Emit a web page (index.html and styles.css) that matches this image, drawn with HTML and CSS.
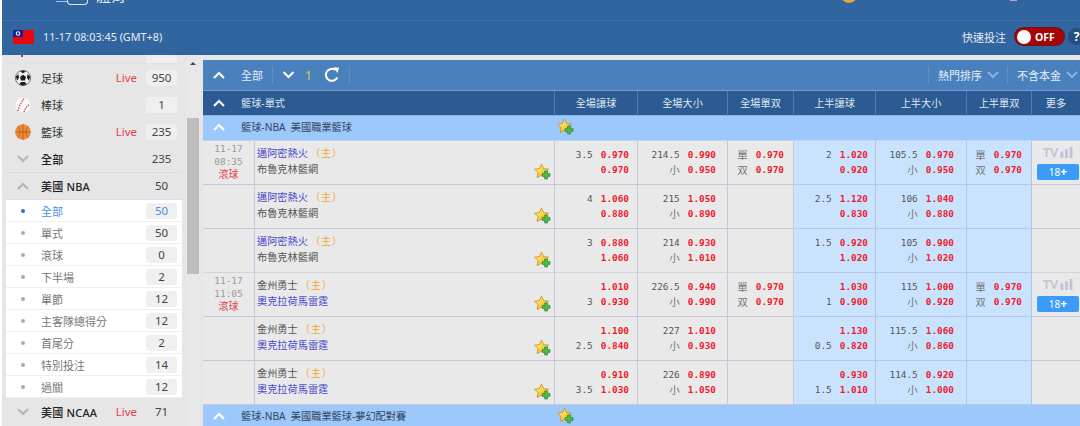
FILE: index.html
```html
<!DOCTYPE html>
<html>
<head>
  <title>籃球 - 單式</title>
  <meta charset="utf-8">
  <link rel="stylesheet" href="styles.css">
</head>
<body>
  <svg class="sprite" width="0" height="0">
    <defs>
      <linearGradient id="gold" x1="0" y1="0" x2="1" y2="1">
        <stop offset="0" stop-color="#fff6a8"/><stop offset=".55" stop-color="#f8d23c"/><stop offset="1" stop-color="#dd9a16"/>
      </linearGradient>
      <symbol id="star" viewBox="0 0 17 17">
        <path d="M7.5 1l2.1 4.6 4.9.6-3.6 3.4.9 5-4.3-2.5-4.4 2.5 1-5L.6 6.2l4.9-.6z" fill="url(#gold)" stroke="#c9942a" stroke-width=".9" stroke-linejoin="round"/>
        <path d="M10.6 8h3v2.4H16v3h-2.4V16h-3v-2.6H8.2v-3h2.4z" fill="#4fb848" stroke="#2f8a35" stroke-width=".7"/>
      </symbol>
      <symbol id="up" viewBox="0 0 12 8"><path d="M1 7l5-5 5 5" fill="none" stroke="currentColor" stroke-width="2"/></symbol>
      <symbol id="down" viewBox="0 0 12 8"><path d="M1 1l5 5 5-5" fill="none" stroke="currentColor" stroke-width="2"/></symbol>
    </defs>
  </svg>

  <header class="top">
    <div class="brand">
      <span class="brand-line"></span><span class="brand-box"></span><span class="brand-text">體育</span>
    </div>
    <span class="coin"></span>
    <span class="bit"></span>
  </header>
  <div class="subbar">
    <svg class="flag" viewBox="0 0 21 14">
      <rect width="21" height="14" fill="#e8080f"/><rect width="10" height="7" fill="#12209a"/>
      <circle cx="5" cy="3.5" r="2.2" fill="#fff"/><circle cx="5" cy="3.5" r="1.2" fill="#12209a"/>
    </svg>
    <span class="clock">11-17 08:03:45 (GMT+8)</span>
    <span class="quick">快速投注</span>
    <span class="toggle"><i class="knob"></i>OFF</span>
    <span class="help">?</span>
  </div>

  <div class="page">
    <aside class="side">
      <div class="cut"><span class="cut-mark"></span><span class="pill cut-pill"></span></div>
      <div class="s-row">
        <svg class="ball" viewBox="0 0 16 16"><circle cx="8" cy="8" r="7.6" fill="#eee" stroke="#444" stroke-width=".7"/><path d="M8 4.8l3 2.3-1.100 3.500H6.100L5 7.100zM8 .5l2.800 1L8 3.200 5.200 1.500zM.8 6.500l2.600-2.200.6 3.500-1.900 2.600zM15.200 6.500l-2.600-2.200-.6 3.500 1.900 2.600zM4.300 14.300l1.700-2.200h4l1.700 2.200L8 15.500z" fill="#1c1c1c"/></svg>
        <span class="s-name">足球</span><span class="live">Live</span><span class="pill">950</span>
      </div>
      <div class="s-row">
        <svg class="ball" viewBox="0 0 16 16"><circle cx="8" cy="8" r="7.6" fill="#fafafa"/><path d="M3 14c.5-4 3-8 6-12.500M9 15c1-3 3-6 6-8" fill="none" stroke="#d8453a" stroke-width="1.300" stroke-dasharray="1.500 1"/></svg>
        <span class="s-name">棒球</span><span class="pill">1</span>
      </div>
      <div class="s-row">
        <svg class="ball" viewBox="0 0 16 16"><circle cx="8" cy="8" r="7.800" fill="#ee8a35"/><path d="M.4 8h15.200M8 .2v15.600M2.700 2.500c3 3 3 8 0 11M13.300 2.500c-3 3-3 8 0 11" fill="none" stroke="#a9551c" stroke-width=".7"/></svg>
        <span class="s-name">籃球</span><span class="live">Live</span><span class="pill">235</span>
      </div>
      <div class="s-row s-line s-first">
        <svg class="chev"><use href="#down"/></svg>
        <span class="s-name s-bold">全部</span><span class="pill flat">235</span>
      </div>
      <div class="s-row s-line">
        <svg class="chev"><use href="#up"/></svg>
        <span class="s-name s-bold">美國 NBA</span><span class="pill flat">50</span>
      </div>
      <div class="sub active"><i class="dot"></i><span class="s-name">全部</span><span class="pill">50</span></div>
      <div class="sub"><i class="dot"></i><span class="s-name">單式</span><span class="pill">50</span></div>
      <div class="sub"><i class="dot"></i><span class="s-name">滾球</span><span class="pill">0</span></div>
      <div class="sub"><i class="dot"></i><span class="s-name">下半場</span><span class="pill">2</span></div>
      <div class="sub"><i class="dot"></i><span class="s-name">單節</span><span class="pill">12</span></div>
      <div class="sub"><i class="dot"></i><span class="s-name">主客隊總得分</span><span class="pill">12</span></div>
      <div class="sub"><i class="dot"></i><span class="s-name">首尾分</span><span class="pill">2</span></div>
      <div class="sub"><i class="dot"></i><span class="s-name">特別投注</span><span class="pill">14</span></div>
      <div class="sub"><i class="dot"></i><span class="s-name">過關</span><span class="pill">12</span></div>
      <div class="s-row">
        <svg class="chev"><use href="#down"/></svg>
        <span class="s-name s-bold">美國 NCAA</span><span class="live">Live</span><span class="pill flat">71</span>
      </div>
    </aside>

    <div class="scroll"><i class="scroll-arrow"></i><i class="scroll-thumb"></i></div>

    <main class="main">
      <div class="tools">
        <svg class="chev-w"><use href="#up"/></svg>
        <span class="tools-all">全部</span>
        <i class="sep"></i>
        <svg class="chev-w"><use href="#down"/></svg>
        <span class="tools-num">1</span>
        <svg class="refresh" viewBox="0 0 16 16"><path d="M13.300 10.500A6 6 0 1 1 11.500 3" fill="none" stroke="#fff" stroke-width="2"/><path d="M9.500 .3l5.500.5-1.500 5.200z" fill="#fff"/></svg>
        <i class="sep"></i>
        <span class="tools-gap"></span>
        <i class="sep"></i>
        <span class="drop">熱門排序<svg class="chev-d"><use href="#down"/></svg></span>
        <i class="sep sep-r"></i>
        <span class="drop">不含本金<svg class="chev-d"><use href="#down"/></svg></span>
      </div>

      <table class="odds">
        <colgroup>
          <col class="c-time"><col class="c-team"><col class="c-hdp"><col class="c-ou"><col class="c-oe"><col class="c-hhdp"><col class="c-hou"><col class="c-hoe"><col class="c-more">
        </colgroup>
        <tr class="head">
          <th colspan="2" class="head-title"><svg class="chev-w"><use href="#up"/></svg><span>籃球-單式</span></th>
          <th>全場讓球</th><th>全場大小</th><th>全場單双</th><th>上半讓球</th><th>上半大小</th><th>上半單双</th><th>更多</th>
        </tr>
        <tr class="league">
          <td colspan="2"><svg class="chev-w"><use href="#up"/></svg><span>籃球-NBA&nbsp; 美國職業籃球</span></td>
          <td colspan="7"><svg class="star"><use href="#star"/></svg></td>
        </tr>

        <tr class="game">
          <td class="time">11-17<br>08:35<br><em>滾球</em></td>
          <td><div class="team"><div class="names"><div class="fav">邁阿密熱火<span class="home">（主）</span></div><div>布魯克林籃網</div></div><svg class="star"><use href="#star"/></svg></div></td>
          <td class="o o-a"><p><span class="k">3.5</span><b>0.970</b></p><p><b>0.970</b></p></td>
          <td class="o o-b"><p><span class="k">214.5</span><b>0.990</b></p><p><span class="w">小</span><b>0.950</b></p></td>
          <td class="o o-c"><p><span class="w">單</span><b>0.970</b></p><p><span class="w">双</span><b>0.970</b></p></td>
          <td class="o o-a hi"><p><span class="k">2</span><b>1.020</b></p><p><b>0.920</b></p></td>
          <td class="o o-b hi"><p><span class="k">105.5</span><b>0.970</b></p><p><span class="w">小</span><b>0.950</b></p></td>
          <td class="o o-c hi"><p><span class="w">單</span><b>0.970</b></p><p><span class="w">双</span><b>0.970</b></p></td>
          <td class="more"><div class="tv">TV<svg class="tv-bars" viewBox="0 0 13 12"><path d="M0 5h3v7H0zM5 2.500h3V12H5zM10 0h3v12h-3z" fill="#c2c2d6"/></svg></div><span class="age">18<b>+</b></span></td>
        </tr>
        <tr class="game">
          <td class="time"></td>
          <td><div class="team"><div class="names"><div class="fav">邁阿密熱火<span class="home">（主）</span></div><div>布魯克林籃網</div></div><svg class="star"><use href="#star"/></svg></div></td>
          <td class="o o-a"><p><span class="k">4</span><b>1.060</b></p><p><b>0.880</b></p></td>
          <td class="o o-b"><p><span class="k">215</span><b>1.050</b></p><p><span class="w">小</span><b>0.890</b></p></td>
          <td class="o o-c"></td>
          <td class="o o-a hi"><p><span class="k">2.5</span><b>1.120</b></p><p><b>0.830</b></p></td>
          <td class="o o-b hi"><p><span class="k">106</span><b>1.040</b></p><p><span class="w">小</span><b>0.880</b></p></td>
          <td class="o o-c hi"></td>
          <td class="more"></td>
        </tr>
        <tr class="game end">
          <td class="time"></td>
          <td><div class="team"><div class="names"><div class="fav">邁阿密熱火<span class="home">（主）</span></div><div>布魯克林籃網</div></div><svg class="star"><use href="#star"/></svg></div></td>
          <td class="o o-a"><p><span class="k">3</span><b>0.880</b></p><p><b>1.060</b></p></td>
          <td class="o o-b"><p><span class="k">214</span><b>0.930</b></p><p><span class="w">小</span><b>1.010</b></p></td>
          <td class="o o-c"></td>
          <td class="o o-a hi"><p><span class="k">1.5</span><b>0.920</b></p><p><b>1.020</b></p></td>
          <td class="o o-b hi"><p><span class="k">105</span><b>0.900</b></p><p><span class="w">小</span><b>1.020</b></p></td>
          <td class="o o-c hi"></td>
          <td class="more"></td>
        </tr>

        <tr class="game">
          <td class="time">11-17<br>11:05<br><em>滾球</em></td>
          <td><div class="team"><div class="names"><div>金州勇士<span class="home">（主）</span></div><div class="fav">奧克拉荷馬雷霆</div></div><svg class="star"><use href="#star"/></svg></div></td>
          <td class="o o-a"><p><b>1.010</b></p><p><span class="k">3</span><b>0.930</b></p></td>
          <td class="o o-b"><p><span class="k">226.5</span><b>0.940</b></p><p><span class="w">小</span><b>0.990</b></p></td>
          <td class="o o-c"><p><span class="w">單</span><b>0.970</b></p><p><span class="w">双</span><b>0.970</b></p></td>
          <td class="o o-a hi"><p><b>1.030</b></p><p><span class="k">1</span><b>0.900</b></p></td>
          <td class="o o-b hi"><p><span class="k">115</span><b>1.000</b></p><p><span class="w">小</span><b>0.920</b></p></td>
          <td class="o o-c hi"><p><span class="w">單</span><b>0.970</b></p><p><span class="w">双</span><b>0.970</b></p></td>
          <td class="more"><div class="tv">TV<svg class="tv-bars" viewBox="0 0 13 12"><path d="M0 5h3v7H0zM5 2.500h3V12H5zM10 0h3v12h-3z" fill="#c2c2d6"/></svg></div><span class="age">18<b>+</b></span></td>
        </tr>
        <tr class="game">
          <td class="time"></td>
          <td><div class="team"><div class="names"><div>金州勇士<span class="home">（主）</span></div><div class="fav">奧克拉荷馬雷霆</div></div><svg class="star"><use href="#star"/></svg></div></td>
          <td class="o o-a"><p><b>1.100</b></p><p><span class="k">2.5</span><b>0.840</b></p></td>
          <td class="o o-b"><p><span class="k">227</span><b>1.010</b></p><p><span class="w">小</span><b>0.930</b></p></td>
          <td class="o o-c"></td>
          <td class="o o-a hi"><p><b>1.130</b></p><p><span class="k">0.5</span><b>0.820</b></p></td>
          <td class="o o-b hi"><p><span class="k">115.5</span><b>1.060</b></p><p><span class="w">小</span><b>0.860</b></p></td>
          <td class="o o-c hi"></td>
          <td class="more"></td>
        </tr>
        <tr class="game">
          <td class="time"></td>
          <td><div class="team"><div class="names"><div>金州勇士<span class="home">（主）</span></div><div class="fav">奧克拉荷馬雷霆</div></div><svg class="star"><use href="#star"/></svg></div></td>
          <td class="o o-a"><p><b>0.910</b></p><p><span class="k">3.5</span><b>1.030</b></p></td>
          <td class="o o-b"><p><span class="k">226</span><b>0.890</b></p><p><span class="w">小</span><b>1.050</b></p></td>
          <td class="o o-c"></td>
          <td class="o o-a hi"><p><b>0.930</b></p><p><span class="k">1.5</span><b>1.010</b></p></td>
          <td class="o o-b hi"><p><span class="k">114.5</span><b>0.920</b></p><p><span class="w">小</span><b>1.000</b></p></td>
          <td class="o o-c hi"></td>
          <td class="more"></td>
        </tr>

        <tr class="league">
          <td colspan="2"><svg class="chev-w"><use href="#up"/></svg><span>籃球-NBA&nbsp; 美國職業籃球-夢幻配對賽</span></td>
          <td colspan="7"><svg class="star"><use href="#star"/></svg></td>
        </tr>
      </table>
    </main>
  </div>
</body>
</html>
```
FILE: styles.css
```css
* { box-sizing:border-box; }
html, body { margin:0; height:426px; overflow:hidden; }
body { background:#fff; padding-left:2px; font-family:"Noto Sans","Noto Sans CJK TC",sans-serif; font-size:11px; color:#555; }
.sprite { position:absolute; }

/* header */
.top { display:flex; height:21px; background:#31659f; border-bottom:1px solid #3c72ac; overflow:hidden; }
.brand { display:flex; align-items:flex-start; width:838px; padding-left:54px; }
.brand-line { width:11px; height:1px; margin-top:1px; background:#aac4de; }
.brand-box { width:21px; height:5px; border:1px solid #dfe8f2; border-top:0; border-radius:0 0 4px 4px; }
.brand-text { margin:-13px 0 0 8px; color:#e6eef6; font-size:15px; line-height:16px; }
.coin { width:18px; height:18px; margin-top:-15px; border-radius:50%; background:#eaa63c; }
.bit { width:7px; height:1px; margin-left:152px; background:#d89ab8; }

.subbar { display:flex; align-items:center; height:34px; padding:0 0 3px 11px; background:#31659f; color:#e3ebf4; overflow:hidden; }
.flag { width:21px; height:14px; }
.clock { flex:1; margin-left:9px; font-size:10.8px; }
.quick { margin-right:9px; font-size:11px; }
.toggle { display:flex; align-items:center; width:49px; height:17px; padding-left:2px; border-radius:9px; background:#a80404; box-shadow:0 0 0 1px #6d1220; color:#fff; font-size:10.5px; font-weight:700; }
.knob { width:14px; height:14px; margin-right:4px; border-radius:50%; background:#fff; }
.help { flex:none; width:17px; height:17px; margin:0 -5px 0 4px; border-radius:50%; background:#23507f; color:#fff; font-size:12px; font-weight:700; line-height:17px; text-align:center; }

.page { display:flex; height:371px; background:#e6e6e6; }

/* sidebar */
.side { flex:none; width:176px; margin-left:4px; overflow:hidden; background:#e6e6e6; }
.cut { display:flex; justify-content:space-between; height:9px; padding:0 5px 0 15px; overflow:hidden; border-bottom:1px solid #e1e1e1; }
.cut-mark { width:2px; height:2px; background:#c8323c; }
.cut-pill { height:3px; background:#eee; }
.s-row { display:flex; align-items:center; height:27px; padding:0 5px 0 9px; background:#e6e6e6; color:#333; }
.s-line { border-bottom:1px solid #dcdce6; }
.s-first { margin-top:1px; }
.ball { flex:none; width:16px; height:16px; }
.chev { flex:none; width:16px; height:8px; padding:0 2px; color:#b5b5b5; }
.s-name { flex:1; margin-left:10px; white-space:nowrap; }
.s-bold { font-weight:500; color:#222; letter-spacing:.2px; }
.live { margin-right:9px; color:#e8434a; font-size:11.5px; }
.pill { flex:none; width:31px; height:16px; border-radius:3px; background:#efefef; font-size:11.5px; line-height:16px; text-align:center; color:#444; }
.pill.flat { background:transparent; }
.sub { display:flex; align-items:center; height:22px; padding:0 5px 0 15px; background:#fff; border-bottom:1px solid #efefef; color:#777; }
.dot { flex:none; width:4px; height:4px; margin-right:6px; border-radius:50%; background:#aaa; }
.sub .s-name { margin-left:10px; }
.sub .pill { height:16px; background:#f0f0f0; }
.active .dot { background:#1a76e0; }
.active .s-name, .active .pill { color:#4a90e2; }

.scroll { flex:none; display:flex; flex-direction:column; align-items:center; width:14px; margin:0 3px 0 4px; background:#e8e8e8; padding-top:7px; }
.scroll-arrow { border:3px solid transparent; border-top:0; border-bottom:3px solid #444; }
.scroll-thumb { width:12px; height:156px; margin-top:53px; background:#bdbdbd; }

/* main */
.main { flex:1; min-width:0; padding-top:5px; overflow:hidden; }
.tools { display:flex; align-items:center; height:31px; padding-left:10px; background:#4a81bd; border-bottom:1px solid #6f9ccb; color:#e6eef6; }
.chev-w { flex:none; width:12px; height:8px; color:#fff; }
.tools-all { margin:0 9px 0 16px; }
.sep { width:1px; height:18px; background:#6390c2; }
.tools .sep + .chev-w { margin-left:9px; width:13px; }
.tools-num { margin:0 12px 0 10px; color:#d9c65a; font-size:12px; }
.refresh { flex:none; width:16px; height:16px; margin-right:9px; }
.tools-gap { flex:1; }
.drop { display:flex; align-items:center; margin-left:9px; white-space:nowrap; }
.chev-d { width:12px; height:8px; margin:0 2px 0 5px; color:#8cb0d8; }
.sep-r { margin-left:6px; }

.odds { width:878px; border-collapse:separate; border-spacing:0; table-layout:fixed; font-size:10.2px; }
.c-time { width:52px; }
.c-team { width:300px; }
.c-hdp { width:83px; }
.c-ou { width:90px; }
.c-oe { width:66px; }
.c-hhdp { width:82px; }
.c-hou { width:91px; }
.c-hoe { width:65px; }
.c-more { width:49px; }

.head th { height:25px; padding:0 0 2px; background:#2c5a92; border-right:1px solid #4f7cb0; border-bottom:1px solid #8fb4dc; color:#dfe8f2; font-weight:400; text-align:center; }
.head th.head-title { padding-left:10px; text-align:left; }
.head-title span, .league span { margin-left:16px; }
.league td { height:25px; padding:0 0 3px 10px; background:#9cc8fb; border-bottom:1px solid #bcd6f2; color:#35445e; vertical-align:middle; }
.league td + td { padding:0 0 3px 2px; }
.league .star { vertical-align:middle; }

.game td { height:44px; padding:0; background:#e9e9e9; border-right:1px solid #c6c6dc; border-bottom:1px solid #c6c6dc; vertical-align:middle; }
.game.end td { border-bottom-color:#d3d3e0; }
.game td.hi { background:#c9e3fe; border-right-color:#b2c4e2; border-bottom-color:#b8c8e4; }
.game .time { color:#999; font-family:"DejaVu Sans Mono",monospace; font-size:9.5px; line-height:12.5px; text-align:center; }
.time em { color:#e0434c; font-family:"Noto Sans CJK TC",sans-serif; font-size:10px; font-style:normal; }
.team { display:flex; justify-content:space-between; align-items:flex-end; height:43px; padding:4px 3px 4px 2px; line-height:16px; }
.names { align-self:flex-start; }
.fav { color:#4a4ac8; }
.home { margin-left:2px; color:#f3a63a; letter-spacing:.8px; }
.star { flex:none; width:17px; height:17px; }

.o p { display:flex; justify-content:flex-end; align-items:center; gap:8px; height:15px; margin:0; }
.game td.o { padding-bottom:2px; }
.game td.o-a { padding-right:8px; }
.game td.o-b { padding-right:11px; }
.game td.o-c { padding-right:9px; }
.game td.o-a.hi { padding-right:7px; }
.game td.o-b.hi { padding-right:12px; }
.o b { color:#ee1c2e; font-family:"DejaVu Sans Mono",monospace; font-size:9.4px; }
.k { color:#555; font-family:"DejaVu Sans Mono",monospace; font-size:9.4px; }
.w { color:#777; font-size:10.5px; }

.more { text-align:center; }
.tv { display:flex; justify-content:center; align-items:center; gap:2px; height:13px; margin-bottom:5px; padding-left:4px; color:#c2c2d6; font-size:13px; font-weight:600; }
.tv-bars { width:13px; height:11px; }
.age { display:block; width:42px; height:16px; margin-left:5px; border-radius:2px; background:#3b9cf8; color:#fff; font-size:10px; line-height:16px; }
.age b { font-size:12px; line-height:10px; }
```
